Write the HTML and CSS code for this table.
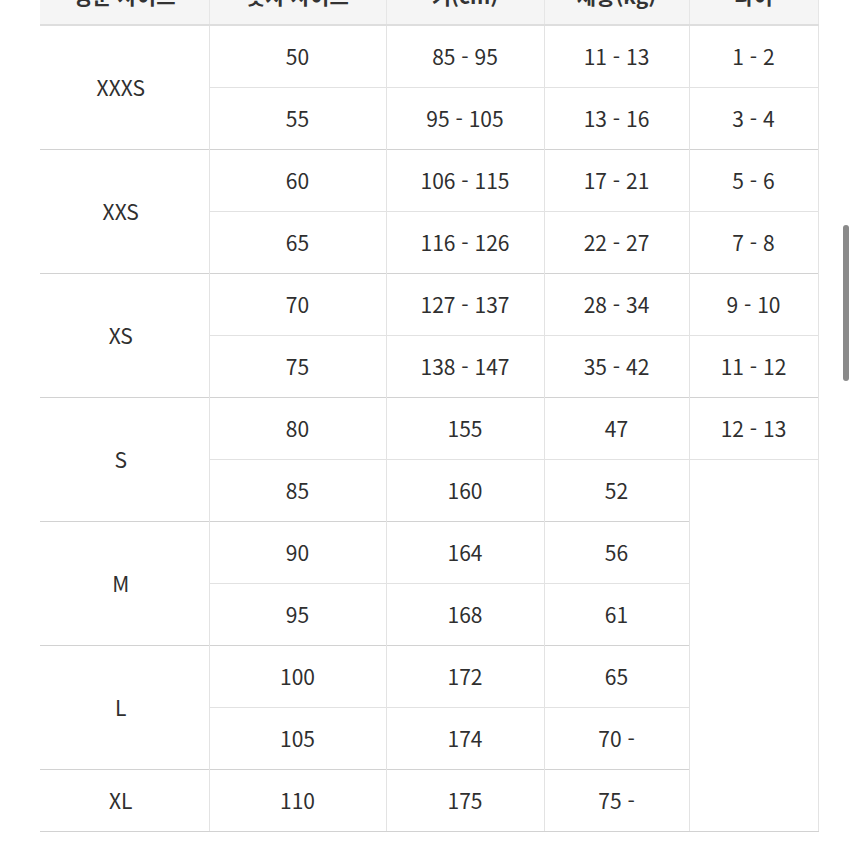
FILE: index.html
```html
<!DOCTYPE html>
<html lang="ko">
<head>
<meta charset="utf-8">
<title>사이즈표</title>
<link rel="stylesheet" href="styles.css">
</head>
<body>
<div class="page">
  <table class="size-table">
    <colgroup>
      <col class="c1"><col class="c2"><col class="c3"><col class="c4"><col class="c5">
    </colgroup>
    <thead>
      <tr><th>영문 사이즈</th><th>숫자 사이즈</th><th>키(cm)</th><th>체중(kg)</th><th>나이</th></tr>
    </thead>
    <tbody>
      <tr class="grp"><td rowspan="2" class="size">XXXS</td><td>50</td><td>85 - 95</td><td>11 - 13</td><td>1 - 2</td></tr>
      <tr><td>55</td><td>95 - 105</td><td>13 - 16</td><td>3 - 4</td></tr>
      <tr class="grp"><td rowspan="2" class="size">XXS</td><td>60</td><td>106 - 115</td><td>17 - 21</td><td>5 - 6</td></tr>
      <tr><td>65</td><td>116 - 126</td><td>22 - 27</td><td>7 - 8</td></tr>
      <tr class="grp"><td rowspan="2" class="size">XS</td><td>70</td><td>127 - 137</td><td>28 - 34</td><td>9 - 10</td></tr>
      <tr><td>75</td><td>138 - 147</td><td>35 - 42</td><td>11 - 12</td></tr>
      <tr class="grp"><td rowspan="2" class="size">S</td><td>80</td><td>155</td><td>47</td><td>12 - 13</td></tr>
      <tr><td>85</td><td>160</td><td>52</td><td rowspan="6" class="empty"></td></tr>
      <tr class="grp"><td rowspan="2" class="size">M</td><td>90</td><td>164</td><td>56</td></tr>
      <tr><td>95</td><td>168</td><td>61</td></tr>
      <tr class="grp"><td rowspan="2" class="size">L</td><td>100</td><td>172</td><td>65</td></tr>
      <tr><td>105</td><td>174</td><td>70 -</td></tr>
      <tr class="grp last"><td class="size">XL</td><td>110</td><td>175</td><td>75 -</td></tr>
    </tbody>
  </table>
  <div class="scrollbar"></div>
</div>
</body>
</html>
```

FILE: styles.css
```css
html, body {
  margin: 0;
  padding: 0;
  background: #ffffff;
}

body {
  font-family: "Noto Sans CJK KR", "Noto Sans", sans-serif;
  color: #2f2f2f;
  overflow: hidden;
}

.page {
  position: relative;
  width: 856px;
  height: 856px;
  overflow: hidden;
}

.size-table {
  margin-top: -35px;
  margin-left: 40px;
  width: 778px;
  border-collapse: collapse;
  table-layout: fixed;
  font-size: 21px;
}

.c1 { width: 169px; }
.c2 { width: 177px; }
.c3 { width: 158px; }
.c4 { width: 145px; }
.c5 { width: 129px; }

.size-table th {
  height: 59px;
  background: #f5f5f5;
  font-weight: 700;
  color: #333;
  border-right: 1px solid #e6e6e6;
  border-bottom: 2px solid #dedede;
  padding: 0;
}

.size-table td {
  height: 61px;
  padding: 0;
  text-align: center;
  vertical-align: middle;
  border-right: 1px solid #e3e3e3;
  border-top: 1px solid #e2e2e2;
  line-height: 1;
}

.size-table td.size {
  padding-right: 7px;
}

.size-table tr.grp td {
  border-top: 1px solid #d2d2d2;
}

.size-table tr.last td {
  border-bottom: 1px solid #d2d2d2;
}

.size-table td.empty {
  border-bottom: 1px solid #d2d2d2;
}

.scrollbar {
  position: absolute;
  left: 843px;
  top: 225px;
  width: 6px;
  height: 156px;
  border-radius: 3px;
  background: #8a8a8a;
}
```
